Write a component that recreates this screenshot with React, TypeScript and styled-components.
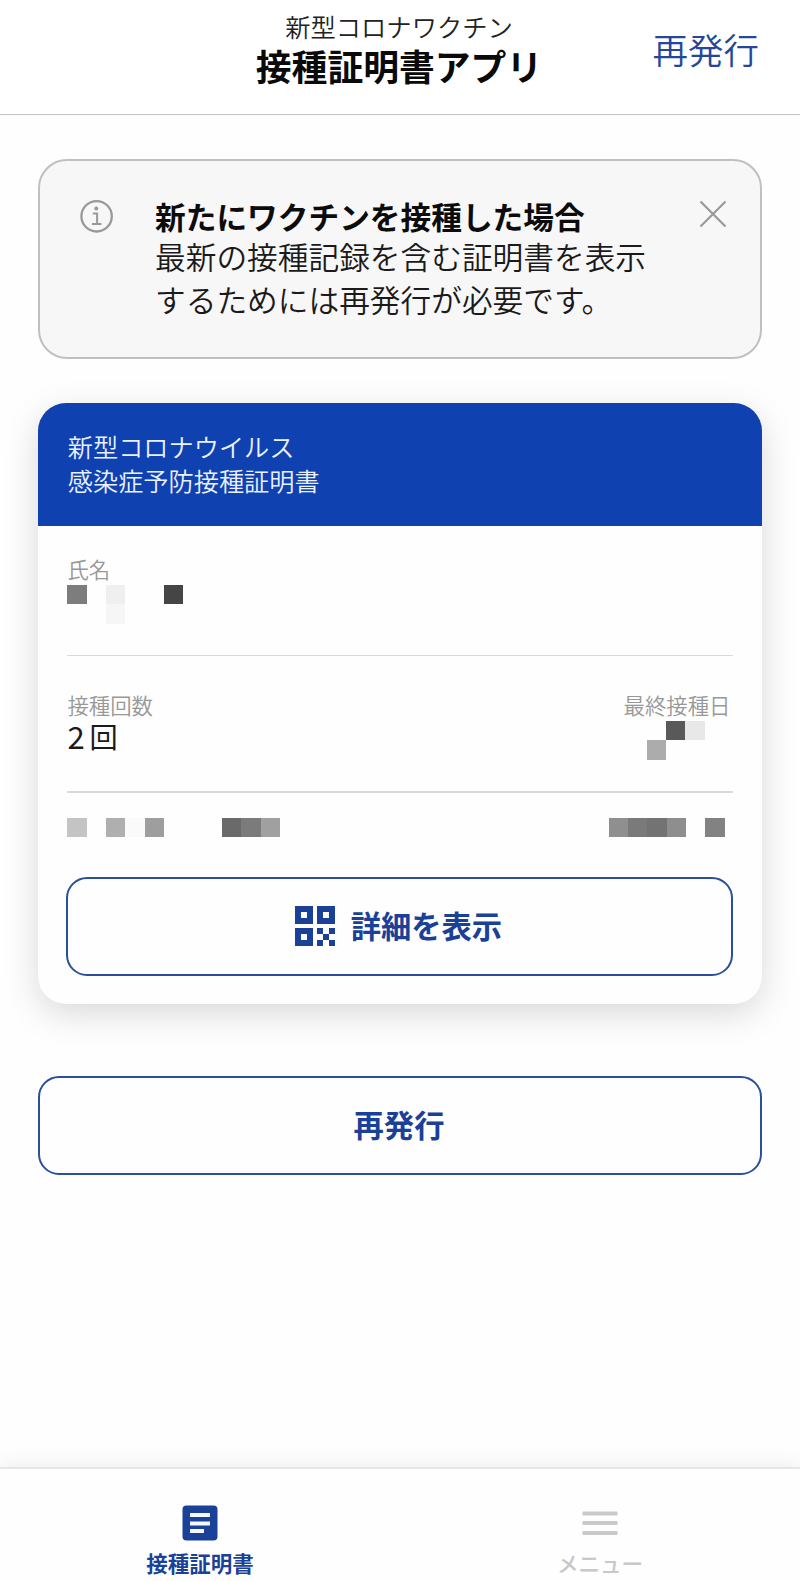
import React from "react";
import styled, { createGlobalStyle } from "styled-components";

const GlobalStyle = createGlobalStyle`
  *, *::before, *::after { box-sizing: border-box; }
  body {
    margin: 0;
    background: #fefefe;
    font-family: "Noto Sans CJK JP", sans-serif;
    font-weight: 350;
    color: #1a1a1a;
  }
  button { font: inherit; cursor: pointer; }
`;

const BRAND = "#1a4197";

const Screen = styled.div`
  width: 800px;
  height: 1581px;
  display: flex;
  flex-direction: column;
  overflow: hidden;
`;

const TopBar = styled.header`
  flex: none;
  height: 115px;
  display: grid;
  grid-template-columns: 1fr auto 1fr;
  border-bottom: 1px solid #c4c4c4;
  background: #fff;
`;

const Titles = styled.div`
  grid-column: 2;
  display: flex;
  flex-direction: column;
  align-items: center;
  padding: 8px 2px 0 0;
`;

const AppCaption = styled.span`
  font-size: 25.3px;
  line-height: 36px;
  color: #222;
`;

const AppTitle = styled.h1`
  margin: 0;
  font-size: 35.8px;
  line-height: 42px;
  font-weight: 700;
  color: #0a0a0a;
`;

const TopAction = styled.button`
  justify-self: end;
  align-self: start;
  margin: 23px 41px 0 0;
  padding: 0;
  border: 0;
  background: none;
  font-size: 35.5px;
  line-height: 52px;
  color: #24479a;
`;

const Content = styled.main`
  flex: 1;
  display: flex;
  flex-direction: column;
  padding: 44px 38px 0;
`;

const Notice = styled.section`
  height: 200px;
  display: flex;
  align-items: flex-start;
  padding: 0 33px 0 40px;
  border: 2px solid #c0c0c0;
  border-radius: 29px;
  background: #f7f7f7;
`;

const NoticeIcon = styled.svg`
  flex: none;
  margin-top: 38px;
`;

const NoticeBody = styled.div`
  flex: 1;
  padding: 34px 0 0 41px;
  font-size: 30.7px;
  white-space: nowrap;
`;

const NoticeTitle = styled.h2`
  margin: 0;
  font-size: inherit;
  line-height: 42px;
  font-weight: 700;
  color: #0c0c0c;
`;

const NoticeText = styled.p`
  margin: -3px 0 0;
  line-height: 43px;
`;

const CloseButton = styled.button`
  display: flex;
  margin-top: 38.5px;
  padding: 0;
  border: 0;
  background: none;
`;

const Card = styled.section`
  height: 601px;
  margin: 44px 0.5px 0 0.4px;
  border-radius: 28px;
  background: #fefefe;
  overflow: hidden;
  box-shadow: 0 10px 34px rgba(0, 0, 0, 0.15);
`;

const CardHeader = styled.h2`
  margin: 0;
  height: 123px;
  padding: 27px 29px 0 29.4px;
  background: #0f41b0;
  color: #eaf1ff;
  font-size: 25.2px;
  font-weight: 350;
  line-height: 33.5px;
`;

const CardBody = styled.div`
  padding: 0 29px 0 29px;
`;

const Row = styled.div<{ $height: number; $top: number; $divider?: string }>`
  display: flex;
  justify-content: space-between;
  height: ${(p) => p.$height}px;
  padding-top: ${(p) => p.$top}px;
  border-bottom: ${(p) => (p.$divider ? `${p.$divider} solid #d8dada` : "0")};
`;

const Field = styled.div<{ $end?: boolean }>`
  display: flex;
  flex-direction: column;
  align-items: ${(p) => (p.$end ? "flex-end" : "flex-start")};
  padding-right: ${(p) => (p.$end ? 2 : 0)}px;
`;

const Label = styled.span`
  font-size: 21.4px;
  line-height: 31px;
  color: #989898;
`;

const Value = styled.span`
  display: flex;
  gap: 5px;
  font-size: 28.2px;
  font-weight: 400;
  line-height: 32px;
`;

const Digit = styled.span`
  font-size: 31px;
`;

const Mosaic = styled.div<{ $cols: number; $top?: number; $end?: number }>`
  display: grid;
  grid-template-columns: repeat(${(p) => p.$cols}, 19.33px);
  grid-auto-rows: 19.33px;
  margin-top: ${(p) => p.$top ?? 0}px;
  margin-right: ${(p) => p.$end ?? 0}px;
`;

const Cell = styled.i<{ $tone: string }>`
  background: ${(p) => p.$tone};
`;

const OutlineButton = styled.button<{ $gapTop: number }>`
  flex: none;
  display: flex;
  align-items: center;
  justify-content: center;
  gap: 16px;
  height: 99px;
  margin-top: ${(p) => p.$gapTop}px;
  padding: 0 2px 3px 0;
  border: 2.6px solid #2a4f9c;
  border-radius: 21px;
  background: #fefefe;
  color: ${BRAND};
  font-size: 30.3px;
  font-weight: 700;
  svg { position: relative; top: 1px; }
`;

const DetailButton = styled(OutlineButton)`
  width: 667px;
  margin-left: -1.5px;
`;

const TabBar = styled.nav`
  flex: none;
  height: 114px;
  display: grid;
  grid-template-columns: 1fr 1fr;
  border-top: 2px solid #e6e6e6;
  background: #fefefe;
  box-shadow: 0 -4px 18px rgba(0, 0, 0, 0.06);
`;

const Tab = styled.a<{ $active?: boolean }>`
  display: flex;
  flex-direction: column;
  align-items: center;
  padding-top: 36px;
  font-size: 21.5px;
  line-height: 30px;
  font-weight: ${(p) => (p.$active ? 700 : 500)};
  color: ${(p) => (p.$active ? BRAND : "#c8c8c8")};
  svg { flex: none; margin-bottom: 7px; }
`;

const _ = "transparent";
const nameTones = ["#7d7d7d", _, "#efefef", _, _, "#454545", _, _, "#f6f6f6", _, _, _];
const dateTones = [_, "#595959", "#e8e8e8", "#acacac", _, _];
const leftTones = ["#c4c4c4", _, "#afafaf", "#fafafa", "#9e9e9e", _, _, _, "#6a6a6a", "#7b7b7b", "#a0a0a0"];
const rightTones = ["#8f8f8f", "#7a7a7a", "#737373", "#8e8e8e", _, "#828282"];

const cells = (tones: string[]) => tones.map((t, i) => <Cell key={i} $tone={t} />);

export default function App() {
  return (
    <Screen>
      <GlobalStyle />
      <TopBar>
        <Titles>
          <AppCaption>新型コロナワクチン</AppCaption>
          <AppTitle>接種証明書アプリ</AppTitle>
        </Titles>
        <TopAction>再発行</TopAction>
      </TopBar>

      <Content>
        <Notice>
          <NoticeIcon width="34" height="34" viewBox="0 0 34 34" fill="none" stroke="#999">
            <circle cx="16.6" cy="17.3" r="15.2" strokeWidth="2.3" />
            <circle cx="16.3" cy="9.6" r="2" fill="#999" stroke="none" />
            <path d="M12.8 14.6h4.3v10M12 24.9h9.4" strokeWidth="2" />
          </NoticeIcon>
          <NoticeBody>
            <NoticeTitle>新たにワクチンを接種した場合</NoticeTitle>
            <NoticeText>
              最新の接種記録を含む証明書を表示
              <br />
              するためには再発行が必要です。
            </NoticeText>
          </NoticeBody>
          <CloseButton aria-label="閉じる">
            <svg width="28" height="28" viewBox="0 0 28 28" stroke="#999" strokeWidth="2.2">
              <path d="M1.5 1.5l25 25M26.5 1.5l-25 25" />
            </svg>
          </CloseButton>
        </Notice>

        <Card>
          <CardHeader>
            新型コロナウイルス
            <br />
            感染症予防接種証明書
          </CardHeader>
          <CardBody>
            <Row $height={130} $top={27} $divider="1px">
              <Field>
                <Label>氏名</Label>
                <Mosaic $cols={6} $top={1}>{cells(nameTones)}</Mosaic>
              </Field>
            </Row>
            <Row $height={137} $top={33} $divider="2px">
              <Field>
                <Label>接種回数</Label>
                <Value>
                  <Digit>2</Digit>
                  <span>回</span>
                </Value>
              </Field>
              <Field $end>
                <Label>最終接種日</Label>
                <Mosaic $cols={3} $top={1} $end={26}>{cells(dateTones)}</Mosaic>
              </Field>
            </Row>
            <Row $height={44} $top={25}>
              <Mosaic $cols={11}>{cells(leftTones)}</Mosaic>
              <Mosaic $cols={6} $end={8}>{cells(rightTones)}</Mosaic>
            </Row>
            <DetailButton $gapTop={40}>
              <svg width="40" height="40" viewBox="0 0 40 40" fill={BRAND}>
                <path
                  fillRule="evenodd"
                  d="M0 0h18v18H0zM6 6v6h6V6zM22 0h18v18H22zM28 6v6h6V6zM0 22h18v18H0zM6 28v6h6v-6z"
                />
                <path d="M22 22h6v6h-6zM34 22h6v6h-6zM28 28h6v6h-6zM22 34h6v6h-6zM34 34h6v6h-6z" />
              </svg>
              <span>詳細を表示</span>
            </DetailButton>
          </CardBody>
        </Card>

        <OutlineButton $gapTop={72}>再発行</OutlineButton>
      </Content>

      <TabBar>
        <Tab $active>
          <svg width="36" height="36" viewBox="0 0 36 36">
            <rect x="0.5" y="0.5" width="35" height="35" rx="4" fill={BRAND} />
            <path d="M8 10h20M8 18.5h20M8 26h14" stroke="#f4f8ff" strokeWidth="4" />
          </svg>
          <span>接種証明書</span>
        </Tab>
        <Tab>
          <svg width="36" height="36" viewBox="0 0 36 36" stroke="#c9c9c9" strokeWidth="4">
            <path d="M0.5 8.5h35M0.5 18h35M0.5 28h35" />
          </svg>
          <span>メニュー</span>
        </Tab>
      </TabBar>
    </Screen>
  );
}
